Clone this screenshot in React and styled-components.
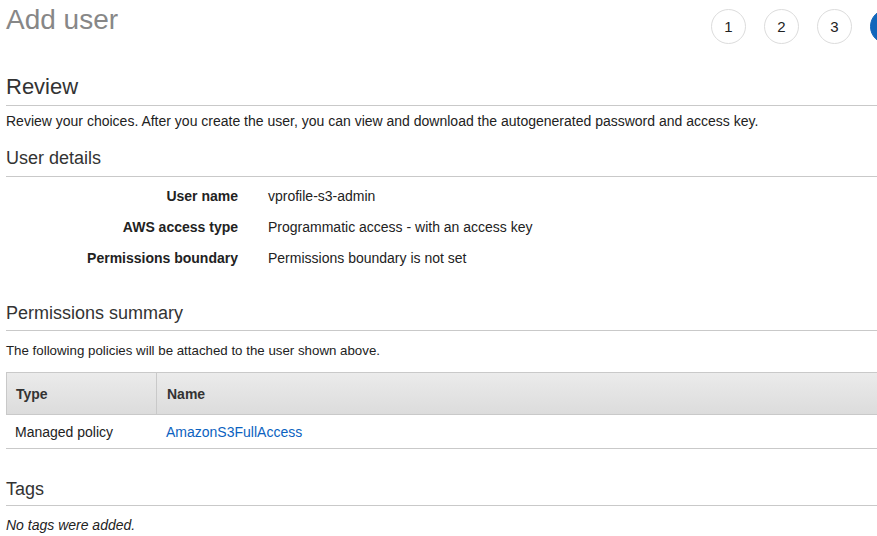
import React from 'react';
import styled, { createGlobalStyle } from 'styled-components';

const GlobalStyle = createGlobalStyle`
  html, body {
    margin: 0;
    padding: 0;
    background: #fff;
    overflow: hidden;
  }
  body {
    font-family: "Liberation Sans", Arial, Helvetica, sans-serif;
    color: #222;
  }
`

const Page = styled.div`
  box-sizing: border-box;
  width: 905px;
  padding-left: 6px;
`

const Header = styled.div`
  display: flex;
  justify-content: space-between;
  align-items: flex-start;
  height: 62px;
`

const Title = styled.h1`
  margin: 2px 0 0;
  font-size: 28px;
  line-height: 36px;
  font-weight: normal;
  color: #878787;
`

const Steps = styled.div`
  display: flex;
  gap: 18px;
  margin-top: 9px;
`

const Step = styled.div`
  box-sizing: border-box;
  width: 35px;
  height: 35px;
  border-radius: 50%;
  display: flex;
  align-items: center;
  justify-content: center;
  font-size: 15px;
  border: 1px solid ${props => props.active ? '#1166bb' : '#dcdcdc'};
  background: ${props => props.active ? '#1166bb' : '#fff'};
  color: ${props => props.active ? '#fff' : '#222'};
`

const Heading = styled.h2`
  margin: ${props => props.top}px 0 0;
  padding-bottom: ${props => props.pad}px;
  font-size: ${props => props.size}px;
  line-height: ${props => props.size + 4}px;
  font-weight: normal;
  color: #333;
  border-bottom: 1px solid #c9c9c9;
`

const Text = styled.p`
  margin: ${props => props.top}px 0 0;
  font-size: ${props => props.size || 14}px;
  line-height: 20px;
  font-style: ${props => props.italic ? 'italic' : 'normal'};
  color: #222;
`

const Details = styled.div`
  display: grid;
  grid-template-columns: 232px 1fr;
  column-gap: 30px;
  padding-top: 4px;
  font-size: 14px;
  line-height: 31px;
`

const Label = styled.div`
  text-align: right;
  font-weight: bold;
  color: #222;
`

const Value = styled.div`
  color: #222;
`

const Table = styled.div`
  margin-top: 11px;
  font-size: 14px;
`

const Row = styled.div`
  display: grid;
  grid-template-columns: 150px 1fr;
  align-items: center;
  height: ${props => props.head ? 43 : 34}px;
  box-sizing: border-box;
  border-bottom: 1px solid #c9c9c9;
  ${props => props.head && `
    border: 1px solid #c9c9c9;
    background: linear-gradient(#ebebeb, #dcdcdc);
    font-weight: bold;
    color: #333;
  `}
`

const Cell = styled.div`
  height: 100%;
  display: flex;
  align-items: center;
  padding-left: ${props => props.first ? 9 : 10}px;
  border-right: ${props => props.divider ? '1px solid #c9c9c9' : 'none'};
`

const Link = styled.a`
  color: #0b62c0;
  text-decoration: none;
`

export default function App() {
  return (
    <>
      <GlobalStyle />
      <Page>
        <Header>
          <Title>Add user</Title>
          <Steps>
            <Step>1</Step>
            <Step>2</Step>
            <Step>3</Step>
            <Step active>4</Step>
          </Steps>
        </Header>

        <Heading size={22} top={12} pad={5}>Review</Heading>
        <Text top={5}>Review your choices. After you create the user, you can view and download the autogenerated password and access key.</Text>

        <Heading size={18} top={16} pad={7}>User details</Heading>
        <Details>
          <Label>User name</Label>
          <Value>vprofile-s3-admin</Value>
          <Label>AWS access type</Label>
          <Value>Programmatic access - with an access key</Value>
          <Label>Permissions boundary</Label>
          <Value>Permissions boundary is not set</Value>
        </Details>

        <Heading size={18} top={28} pad={6}>Permissions summary</Heading>
        <Text top={10} size={13.3}>The following policies will be attached to the user shown above.</Text>
        <Table>
          <Row head>
            <Cell first divider>Type</Cell>
            <Cell>Name</Cell>
          </Row>
          <Row>
            <Cell first>Managed policy</Cell>
            <Cell><Link href="#">AmazonS3FullAccess</Link></Cell>
          </Row>
        </Table>

        <Heading size={18} top={29} pad={5}>Tags</Heading>
        <Text top={9} italic>No tags were added.</Text>
      </Page>
    </>
  );
}
